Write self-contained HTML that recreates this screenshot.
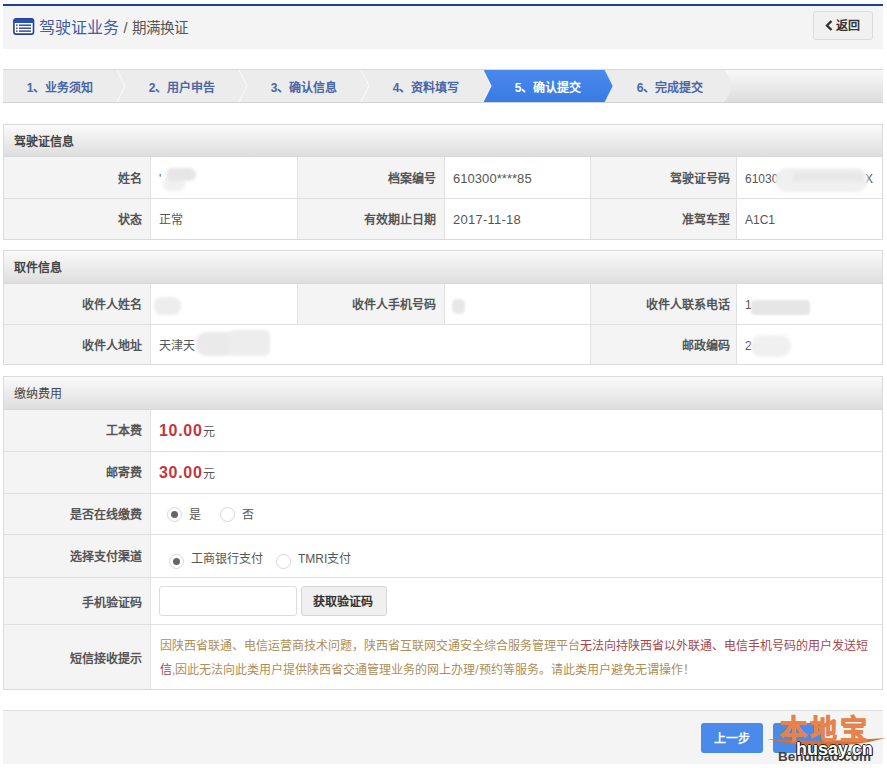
<!DOCTYPE html>
<html lang="zh-CN">
<head>
<meta charset="utf-8">
<style>
*{margin:0;padding:0;box-sizing:border-box;}
html,body{width:887px;height:768px;overflow:hidden;background:#fff;}
body{position:relative;font-family:"Liberation Sans",sans-serif;font-size:12px;color:#555;}
.a{position:absolute;}
.hdr{left:3px;top:4px;width:880px;height:45px;background:#f4f4f4;border-top:2px solid #1c418e;}
.title{left:39px;top:18px;font-size:16px;color:#3d5ba6;white-space:nowrap;line-height:20px;}
.title .sub{font-size:14.5px;color:#555;}
.back{left:813px;top:11px;width:60px;height:29px;border:1px solid #dcdcdc;border-radius:3px;background:#f1f1f1;}
.back span{position:absolute;white-space:nowrap;left:22px;top:6px;font-size:12px;font-weight:bold;color:#333;line-height:16px;}
.steps{left:3px;top:69px;width:880px;height:34px;}
.st{position:absolute;top:80px;width:122px;text-align:center;font-weight:bold;color:#4a66a4;line-height:16px;white-space:nowrap;}
.panel{left:3px;width:880px;border:1px solid #dadada;background:#fff;}
.ph{position:absolute;left:0;top:0;width:100%;background:linear-gradient(#fafafa,#dedede);border-bottom:1px solid #d8d8d8;}
.ph span{position:absolute;left:10px;top:9px;line-height:16px;color:#444;}
.hl{position:absolute;left:0;width:100%;height:1px;background:#e0e0e0;}
.vl{position:absolute;width:1px;background:#e0e0e0;}
.lb{position:absolute;background:#f4f4f4;}
.lt{position:absolute;text-align:right;font-weight:bold;color:#555;line-height:16px;white-space:nowrap;}
.vt{position:absolute;color:#555;line-height:16px;white-space:nowrap;}
.blob{position:absolute;background:#e9e9e9;border-radius:8px;filter:blur(1.5px);}
.price{font-size:16px;color:#c4363d;font-weight:bold;letter-spacing:0.7px;}
.radio{position:absolute;width:15px;height:15px;border:1px solid #d8d8d8;border-radius:50%;background:#fff;}
.radio.on::after{content:"";position:absolute;left:3px;top:3px;width:7px;height:7px;border-radius:50%;background:#666;}
.hint .w{color:#ad8d58;}
.hint .d{color:#a4464c;}
</style>
</head>
<body>
<!-- header -->
<div class="a hdr"></div>
<svg class="a" style="left:13px;top:18px" width="22" height="18" viewBox="0 0 22 18">
  <rect x="0.9" y="0.9" width="19.6" height="15.2" rx="2.2" fill="#fff" stroke="#2b3f88" stroke-width="1.6"/>
  <rect x="0.9" y="0.9" width="19.6" height="4.2" rx="1.5" fill="#2350b8"/>
  <rect x="3" y="6.5" width="1.5" height="1.4" fill="#2b3f88"/>
  <rect x="3" y="9.5" width="1.5" height="1.4" fill="#2b3f88"/>
  <rect x="3" y="12.4" width="1.5" height="1.4" fill="#2b3f88"/>
  <rect x="6" y="6.5" width="12" height="1.4" fill="#2b3f88"/>
  <rect x="6" y="9.5" width="12" height="1.4" fill="#2b3f88"/>
  <rect x="6" y="12.4" width="12" height="1.4" fill="#2b3f88"/>
</svg>
<div class="a title">驾驶证业务 <span class="sub">/ 期满换证</span></div>
<div class="a back"></div>
<svg class="a" style="left:825px;top:20px" width="8" height="11" viewBox="0 0 8 11"><polyline points="6.5,1 2,5.5 6.5,10" fill="none" stroke="#333" stroke-width="2.4"/></svg>
<div class="a" style="left:836px;top:18px;font-size:12px;font-weight:bold;color:#333;line-height:16px;white-space:nowrap">返回</div>

<!-- steps -->
<svg class="a steps" width="880" height="34" viewBox="3 69 880 34">
  <defs>
    <linearGradient id="sg" x1="0" y1="0" x2="0" y2="1">
      <stop offset="0" stop-color="#f9f9f9"/><stop offset="1" stop-color="#dcdcdc"/>
    </linearGradient>
    <linearGradient id="ag" x1="0" y1="0" x2="0" y2="1">
      <stop offset="0" stop-color="#4a89ee"/><stop offset="1" stop-color="#3a7be2"/>
    </linearGradient>
  </defs>
  <rect x="3" y="69" width="880" height="34" fill="url(#sg)"/>
  <path d="M3,70 L724,70 Q738,86 724,102 L3,102Z" fill="#ececec"/>
  <rect x="3" y="69" width="880" height="1" fill="#d8d8d8"/>
  <rect x="3" y="102" width="880" height="1" fill="#d2d2d2"/>
  <polyline points="117,70 125,86 117,102" fill="none" stroke="#fff" stroke-width="1.3" opacity="0.65"/>
  <polyline points="239,70 247,86 239,102" fill="none" stroke="#fff" stroke-width="1.3" opacity="0.65"/>
  <polyline points="361,70 369,86 361,102" fill="none" stroke="#fff" stroke-width="1.3" opacity="0.65"/>
  <polygon points="483,70 605,70 613,86 605,102 483,102 491,86" fill="url(#ag)"/>
  <polyline points="483,70 491,86 483,102" fill="none" stroke="#fff" stroke-width="1.2" opacity="0.8"/>
  <polyline points="605,70 613,86 605,102" fill="none" stroke="#fff" stroke-width="1" opacity="0.5"/>
</svg>
<div class="st" style="left:-1px">1、业务须知</div>
<div class="st" style="left:121px">2、用户申告</div>
<div class="st" style="left:243px">3、确认信息</div>
<div class="st" style="left:365px">4、资料填写</div>
<div class="st" style="left:487px;color:#fff">5、确认提交</div>
<div class="st" style="left:609px">6、完成提交</div>


<!-- panel 1 -->
<div class="a panel" style="top:124px;height:116px;">
  <div class="ph" style="height:32px"><span style="font-weight:bold">驾驶证信息</span></div>
  <div class="lb" style="left:0;top:32px;width:147px;height:82px"></div>
  <div class="lb" style="left:294px;top:32px;width:146px;height:82px"></div>
  <div class="lb" style="left:587px;top:32px;width:145px;height:82px"></div>
  <div class="hl" style="top:73px"></div>
  <div class="vl" style="left:146px;top:32px;height:82px"></div>
  <div class="vl" style="left:293px;top:32px;height:82px"></div>
  <div class="vl" style="left:440px;top:32px;height:82px"></div>
  <div class="vl" style="left:586px;top:32px;height:82px"></div>
  <div class="vl" style="left:732px;top:32px;height:82px"></div>
</div>
<div class="lt" style="left:40px;top:171px;width:102px">姓名</div>
<div class="lt" style="left:336px;top:171px;width:100px">档案编号</div>
<div class="lt" style="left:630px;top:171px;width:100px">驾驶证号码</div>
<div class="lt" style="left:40px;top:212px;width:102px">状态</div>
<div class="lt" style="left:336px;top:212px;width:100px">有效期止日期</div>
<div class="lt" style="left:630px;top:212px;width:100px">准驾车型</div>
<div class="vt" style="left:159px;top:171px">'</div>
<div class="blob" style="left:163px;top:177px;width:22px;height:14px;border-radius:6px;background:#f0f0f0"></div><div class="blob" style="left:166px;top:168px;width:30px;height:13px;border-radius:7px;background:#e6e6e6"></div>
<div class="vt" style="left:453px;top:171px;font-size:13px;letter-spacing:0.05px">610300****85</div>
<div class="vt" style="left:745px;top:171px">61030</div>
<div class="vt" style="left:865px;top:171px">X</div>
<div class="blob" style="left:775px;top:168px;width:93px;height:24px;border-radius:12px;background:#f0f0f0"></div><div class="blob" style="left:793px;top:172px;width:70px;height:9px;border-radius:4px;background:#e7e7e7"></div>
<div class="vt" style="left:159px;top:212px">正常</div>
<div class="vt" style="left:453px;top:212px;font-size:13px;letter-spacing:0.25px">2017-11-18</div>
<div class="vt" style="left:745px;top:212px">A1C1</div>

<!-- panel 2 -->
<div class="a panel" style="top:250px;height:115px;">
  <div class="ph" style="height:33px"><span style="font-weight:bold">取件信息</span></div>
  <div class="lb" style="left:0;top:33px;width:147px;height:80px"></div>
  <div class="lb" style="left:294px;top:33px;width:146px;height:40px"></div>
  <div class="lb" style="left:587px;top:33px;width:145px;height:80px"></div>
  <div class="hl" style="top:73px"></div>
  <div class="vl" style="left:146px;top:33px;height:80px"></div>
  <div class="vl" style="left:293px;top:33px;height:40px"></div>
  <div class="vl" style="left:440px;top:33px;height:40px"></div>
  <div class="vl" style="left:586px;top:33px;height:80px"></div>
  <div class="vl" style="left:732px;top:33px;height:80px"></div>
</div>
<div class="lt" style="left:40px;top:297px;width:102px">收件人姓名</div>
<div class="lt" style="left:336px;top:297px;width:100px">收件人手机号码</div>
<div class="lt" style="left:630px;top:297px;width:100px">收件人联系电话</div>
<div class="lt" style="left:40px;top:338px;width:102px">收件人地址</div>
<div class="lt" style="left:630px;top:338px;width:100px">邮政编码</div>
<div class="blob" style="left:154px;top:297px;width:27px;height:18px;background:#ededed"></div>
<div class="blob" style="left:452px;top:299px;width:13px;height:15px;border-radius:5px;background:#e8e8e8;filter:blur(1px)"></div>
<div class="vt" style="left:745px;top:297px">1</div>
<div class="blob" style="left:751px;top:300px;width:59px;height:15px;border-radius:4px;background:#e6e6e6;filter:blur(0.8px)"></div>
<div class="vt" style="left:159px;top:338px">天津天</div>
<div class="blob" style="left:196px;top:332px;width:40px;height:24px;border-radius:10px;background:#eaeaea"></div><div class="blob" style="left:228px;top:330px;width:42px;height:26px;border-radius:6px;background:#ededed"></div>
<div class="vt" style="left:745px;top:338px">2</div>
<div class="blob" style="left:751px;top:335px;width:40px;height:22px;border-radius:11px;background:#f0f0f0"></div>


<!-- panel 3 -->
<div class="a panel" style="top:376px;height:314px;">
  <div class="ph" style="height:33px"><span>缴纳费用</span></div>
  <div class="lb" style="left:0;top:33px;width:147px;height:279px"></div>
  <div class="hl" style="top:74px"></div>
  <div class="hl" style="top:116px"></div>
  <div class="hl" style="top:157px"></div>
  <div class="hl" style="top:200px"></div>
  <div class="hl" style="top:247px"></div>
  <div class="vl" style="left:146px;top:33px;height:279px"></div>
</div>
<div class="lt" style="left:40px;top:423px;width:102px">工本费</div>
<div class="lt" style="left:40px;top:465px;width:102px">邮寄费</div>
<div class="lt" style="left:40px;top:507px;width:102px">是否在线缴费</div>
<div class="lt" style="left:40px;top:549px;width:102px">选择支付渠道</div>
<div class="lt" style="left:40px;top:594.5px;width:102px">手机验证码</div>
<div class="lt" style="left:40px;top:651px;width:102px">短信接收提示</div>
<div class="vt" style="left:159px;top:423px"><b class="price">10.00</b>元</div>
<div class="vt" style="left:159px;top:465px"><b class="price">30.00</b>元</div>
<div class="radio on" style="left:167px;top:507px"></div>
<div class="vt" style="left:189px;top:507px">是</div>
<div class="radio" style="left:220px;top:507px"></div>
<div class="vt" style="left:242px;top:507px">否</div>
<div class="radio on" style="left:169px;top:554px"></div>
<div class="vt" style="left:191px;top:551px">工商银行支付</div>
<div class="radio" style="left:276px;top:554px"></div>
<div class="vt" style="left:298px;top:551px">TMRI支付</div>
<div class="a" style="left:159px;top:586px;width:138px;height:30px;border:1px solid #dcdcdc;border-radius:3px;background:#fff"></div>
<div class="a" style="left:301px;top:586px;width:86px;height:30px;border:1px solid #d6d6d6;border-radius:3px;background:#f0f0f0"></div>
<div class="vt" style="left:313px;top:594px;font-weight:bold;color:#333">获取验证码</div>
<div class="vt hint" style="left:160px;top:638px"><span class="w">因陕西省联通、电信运营商技术问题，陕西省互联网交通安全综合服务管理平台</span><span class="d">无法向持陕西省以外联通、电信手机号码的用户发送短</span></div>
<div class="vt hint" style="left:160px;top:662px"><span class="d">信</span><span class="w">,因此无法向此类用户提供陕西省交通管理业务的网上办理/预约等服务。请此类用户避免无谓操作！</span></div>

<!-- footer -->
<div class="a" style="left:3px;top:710px;width:880px;height:54px;background:#f4f4f4;border-top:1px solid #dedede"></div>
<div class="a" style="left:701px;top:723px;width:62px;height:30px;border-radius:3px;background:#4a8aeb"></div>
<div class="vt" style="left:714px;top:731px;font-size:12px;font-weight:bold;color:#fff">上一步</div>
<div class="a" style="left:773px;top:723px;width:52px;height:30px;border-radius:3px;background:#4a8aeb"></div>
<!-- watermark -->
<div class="a" style="left:778px;top:750px;font-size:13.5px;font-weight:bold;color:#444;line-height:14px;white-space:nowrap">Bendibao.com</div>
<svg class="a" style="left:766px;top:736px" width="121" height="14" viewBox="0 0 121 14">
  <path d="M1,3 Q60,18 120,2 Q60,7 1,3Z" fill="#d2733f"/>
</svg>
<div class="a" style="left:780px;top:713px;font-size:27px;font-weight:bold;color:#ea8a4c;line-height:34px;letter-spacing:3px;-webkit-text-stroke:1px #e5834a;white-space:nowrap">本地宝</div>
<div class="a" style="left:796px;top:739px;font-size:18px;font-weight:bold;color:#fff;line-height:20px;white-space:nowrap;text-shadow:-1px 0 0 #222,1px 0 0 #222,0 -1px 0 #222,0 1px 0 #222,1px 1px 0 #222">husay.cn</div>
</body>
</html>
